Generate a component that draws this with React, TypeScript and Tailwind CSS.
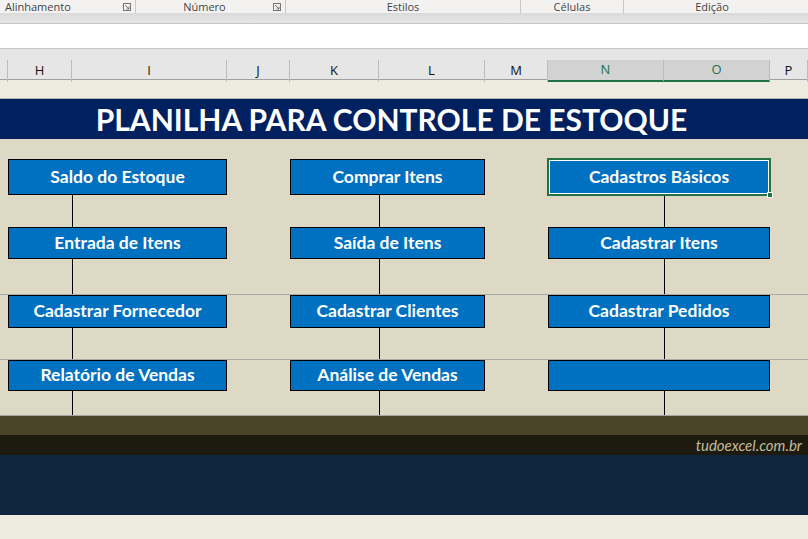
import React from "react";

const gridCols = "grid grid-cols-[8px_64px_155px_63px_89px_106px_63px_116px_106px_1fr]";
const calibri = "[font-family:Lato,'Open_Sans',sans-serif]";

const headers = [
  { id: "G", label: "" },
  { id: "H", label: "H" },
  { id: "I", label: "I" },
  { id: "J", label: "J" },
  { id: "K", label: "K" },
  { id: "L", label: "L" },
  { id: "M", label: "M" },
  { id: "N", label: "N", selected: true },
  { id: "O", label: "O", selected: true },
  { id: "P", label: "P" },
];

const rows = [
  { h: "h-[36px]", items: ["Saldo do Estoque", "Comprar Itens", "Cadastros Básicos"] },
  { h: "h-[32px]", items: ["Entrada de Itens", "Saída de Itens", "Cadastrar Itens"] },
  { h: "h-[33px]", items: ["Cadastrar Fornecedor", "Cadastrar Clientes", "Cadastrar Pedidos"] },
  { h: "h-[31px]", items: ["Relatório de Vendas", "Análise de Vendas", ""] },
];

const gaps = ["h-[32px]", "h-[36px] border-b border-[#a9a9a9]", "h-[32px] border-b border-[#a9a9a9]", "h-[25px] border-b border-[#a6a6a6]"];

const spans = ["col-start-2 col-span-2", "col-start-5 col-span-2", "col-start-8 col-span-2"];

function MenuButton({ label, span, selected }: { label: string; span: string; selected?: boolean }) {
  return (
    <div className={`${span} relative flex items-center justify-center border border-black bg-[#0070c0] text-[17.5px] font-bold text-white ${calibri}`}>
      {label}
      {selected ? (
        <>
          <div className="pointer-events-none absolute -inset-[2px] border-2 border-[#217346]" />
          <div className="pointer-events-none absolute inset-0 border border-white" />
          <div className="absolute -bottom-[4px] -right-[4px] h-[6px] w-[6px] border border-white bg-[#217346]" />
        </>
      ) : null}
    </div>
  );
}

function Connectors({ className }: { className: string }) {
  return (
    <div className={`${gridCols} ${className}`}>
      <div className="col-start-3 border-l border-black" />
      <div className="col-start-6 border-l border-black" />
      <div className="col-start-9 border-l border-black" />
    </div>
  );
}

function RibbonGroup({ label, width, launcher, align = "center" }: { label: string; width: string; launcher?: boolean; align?: "left" | "center" }) {
  return (
    <div className={`${width} flex h-full items-center border-r border-[#c8c8c8]`}>
      <span className={`flex-1 ${align === "left" ? "pl-[5px] text-left" : "text-center"}`}>{label}</span>
      {launcher ? (
        <svg width="8" height="8" viewBox="0 0 8 8" className="mr-[4px]">
          <rect x="0.5" y="0.5" width="7" height="7" fill="none" stroke="#777" />
          <path d="M2 2 L6 6 M6 3.5 V6 H3.5" fill="none" stroke="#777" />
        </svg>
      ) : null}
    </div>
  );
}

export default function App() {
  return (
    <div className="h-[539px] w-[808px] overflow-hidden bg-[#eeece1]">
      {/* ribbon labels */}
      <div className="flex h-[13px] items-center bg-[#f3f2f1] text-[11px] leading-[13px] text-[#444] [font-family:'Open_Sans',sans-serif]">
        <RibbonGroup label="Alinhamento" width="w-[136px]" launcher align="left" />
        <RibbonGroup label="Número" width="w-[150px]" launcher />
        <RibbonGroup label="Estilos" width="w-[235px]" />
        <RibbonGroup label="Células" width="w-[103px]" />
        <div className="flex h-full flex-1 items-center justify-center pr-[8px]">Edição</div>
      </div>
      <div className="h-[11px] bg-gradient-to-b from-[#dadada] to-[#e6e6e6] border-b border-[#c6c6c6]" />
      {/* formula bar */}
      <div className="h-[25px] bg-white border-b border-[#c6c6c6]" />
      {/* column headers */}
      <div className="h-[11px] bg-[#e6e6e6]" />
      <div className={`${gridCols} h-[20px] border-b border-[#a0a0a0] bg-[#e6e6e6] text-[13px] [font-family:'Open_Sans',sans-serif]`}>
        {headers.map((h) => (
          <div
            key={h.id}
            className={`flex items-center justify-center border-r border-[#bdbdbd] ${
              h.selected ? "border-b-2 border-b-[#217346] bg-[#d2d2d2] text-[#217346]" : "text-[#111]"
            }`}
          >
            {h.label}
          </div>
        ))}
      </div>
      <div className="h-[19px] border-b border-[#b4b4b4] bg-[#eeece1]" />
      {/* title */}
      <div className={`flex h-[40px] items-center justify-center bg-[#002060] pr-[25px] text-[30px] font-bold text-white ${calibri}`}>
        PLANILHA PARA CONTROLE DE ESTOQUE
      </div>
      {/* menu area */}
      <div className="bg-[#ddd9c4]">
        <div className="h-[20px]" />
        {rows.map((row, i) => (
          <React.Fragment key={i}>
            <div className={`${gridCols} ${row.h}`}>
              {row.items.map((label, j) => (
                <MenuButton key={j} label={label} span={spans[j]} selected={i === 0 && j === 2} />
              ))}
            </div>
            <Connectors className={gaps[i]} />
          </React.Fragment>
        ))}
      </div>
      <div className="h-[19px] bg-[#4a4529]" />
      <div className={`flex h-[20px] items-center justify-end bg-[#1d1b10] pr-[6px] text-[15px] italic text-[#c4bd97] ${calibri}`}>
        tudoexcel.com.br
      </div>
      <div className="h-[60px] bg-[#0f243e]" />
    </div>
  );
}
